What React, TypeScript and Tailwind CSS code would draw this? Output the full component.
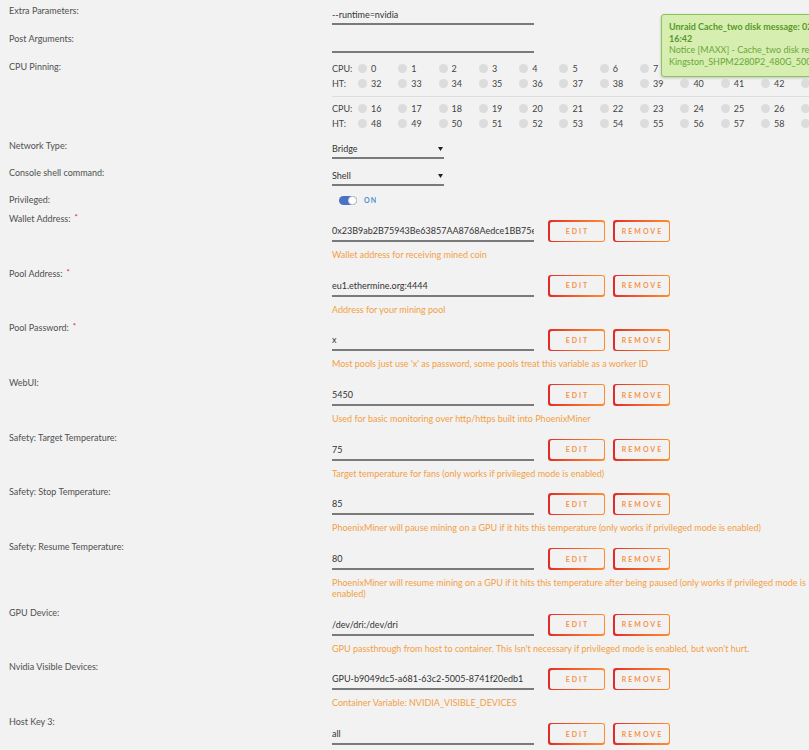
import React from "react";

type Variable = {
  label: string;
  value: string;
  help: string[];
  required?: boolean;
};

const variables: Variable[] = [
  {
    label: "Wallet Address:",
    value: "0x23B9ab2B75943Be63857AA8768Aedce1BB75eD4f",
    help: ["Wallet address for receiving mined coin"],
    required: true,
  },
  {
    label: "Pool Address:",
    value: "eu1.ethermine.org:4444",
    help: ["Address for your mining pool"],
    required: true,
  },
  {
    label: "Pool Password:",
    value: "x",
    help: ["Most pools just use 'x' as password, some pools treat this variable as a worker ID"],
    required: true,
  },
  {
    label: "WebUI:",
    value: "5450",
    help: ["Used for basic monitoring over http/https built into PhoenixMiner"],
  },
  {
    label: "Safety: Target Temperature:",
    value: "75",
    help: ["Target temperature for fans (only works if privileged mode is enabled)"],
  },
  {
    label: "Safety: Stop Temperature:",
    value: "85",
    help: ["PhoenixMiner will pause mining on a GPU if it hits this temperature (only works if privileged mode is enabled)"],
  },
  {
    label: "Safety: Resume Temperature:",
    value: "80",
    help: [
      "PhoenixMiner will resume mining on a GPU if it hits this temperature after being paused (only works if privileged mode is",
      "enabled)",
    ],
  },
  {
    label: "GPU Device:",
    value: "/dev/dri:/dev/dri",
    help: ["GPU passthrough from host to container. This Isn't necessary if privileged mode is enabled, but won't hurt."],
  },
  {
    label: "Nvidia Visible Devices:",
    value: "GPU-b9049dc5-a681-63c2-5005-8741f20edb1",
    help: ["Container Variable: NVIDIA_VISIBLE_DEVICES"],
  },
  {
    label: "Host Key 3:",
    value: "all",
    help: ["Container Variable: NVIDIA_DRIVER_CAPABILITIES"],
  },
];

const cpuRows: { cpu: number[]; ht: number[] }[] = [
  {
    cpu: Array.from({ length: 16 }, (_, i) => i),
    ht: Array.from({ length: 16 }, (_, i) => i + 32),
  },
  {
    cpu: Array.from({ length: 16 }, (_, i) => i + 16),
    ht: Array.from({ length: 16 }, (_, i) => i + 48),
  },
];

function GradientButton({ text }: { text: string }) {
  return (
    <div className="h-[22px] w-[57px] shrink-0 rounded-[3px] bg-linear-to-r from-[#e22828] to-[#ff8c2f] p-[1.5px]">
      <div className="flex h-full w-full items-center justify-center rounded-[2px] bg-[#f2f2f2] pl-[2px] text-[7px] font-bold tracking-[2px] text-[#f7934a]">
        {text}
      </div>
    </div>
  );
}

function Label({ text, required }: { text: string; required?: boolean }) {
  return (
    <div className="w-[332px] shrink-0 pl-[9px] leading-[12px]">
      {text}
      {required && <span className="relative -top-[2px] ml-[4px] text-[8px] text-[#e22828]">*</span>}
    </div>
  );
}

function PinLine({ name, cores }: { name: string; cores: number[] }) {
  return (
    <div className="flex h-[15px] items-center whitespace-nowrap text-[#444]">
      <span className="w-[26px] shrink-0">{name}</span>
      {cores.map((n) => (
        <span key={n} className="flex w-[40.3px] shrink-0 items-center">
          <span className="h-[9px] w-[9px] rounded-full bg-[#dcdcdc]" />
          <span className="ml-[4px]">{n}</span>
        </span>
      ))}
    </div>
  );
}

function DropArrow() {
  return (
    <svg width="5" height="4" viewBox="0 0 5 4" className="mr-[1px]">
      <path d="M0 0 H5 L2.5 4 Z" fill="#222" />
    </svg>
  );
}

export default function App() {
  return (
    <div className="relative min-h-[750px] w-full overflow-hidden bg-[#f2f2f2] pt-[4px] text-[9px] text-[#505050] [font-family:Lato,'Liberation_Sans',sans-serif]">
      {/* Extra Parameters */}
      <div className="mb-[7px] flex">
        <div className="pt-[1px]">
          <Label text="Extra Parameters:" />
        </div>
        <div className="h-[21px] w-[202px] border-b-2 border-[#7a7a7a] pt-[5px] leading-[12px] text-[#333]">
          --runtime=nvidia
        </div>
      </div>

      {/* Post Arguments */}
      <div className="mb-[7px] flex">
        <div className="pt-[1px]">
          <Label text="Post Arguments:" />
        </div>
        <div className="h-[21px] w-[202px] border-b-2 border-[#7a7a7a]" />
      </div>

      {/* CPU Pinning */}
      <div className="mb-[8px] flex">
        <div className="pt-[1px]">
          <Label text="CPU Pinning:" />
        </div>
        <div className="flex-1 pt-[1px]">
          <PinLine name="CPU:" cores={cpuRows[0].cpu} />
          <PinLine name="HT:" cores={cpuRows[0].ht} />
          <div className="mb-[4px] mt-[5px] h-px bg-[#dedede]" />
          <PinLine name="CPU:" cores={cpuRows[1].cpu} />
          <PinLine name="HT:" cores={cpuRows[1].ht} />
        </div>
      </div>

      {/* Network Type */}
      <div className="mb-[7px] flex">
        <div className="pt-[1px]">
          <Label text="Network Type:" />
        </div>
        <div className="flex h-[20px] w-[112px] items-start justify-between border-b-2 border-[#7a7a7a] pt-[4px] leading-[12px] text-[#333]">
          <span>Bridge</span>
          <span className="pt-[4px]">
            <DropArrow />
          </span>
        </div>
      </div>

      {/* Console shell command */}
      <div className="mb-[7px] flex">
        <div className="pt-[1px]">
          <Label text="Console shell command:" />
        </div>
        <div className="flex h-[20px] w-[112px] items-start justify-between border-b-2 border-[#7a7a7a] pt-[4px] leading-[12px] text-[#333]">
          <span>Shell</span>
          <span className="pt-[4px]">
            <DropArrow />
          </span>
        </div>
      </div>

      {/* Privileged */}
      <div className="mb-[7px] flex">
        <div className="pt-[1px]">
          <Label text="Privileged:" />
        </div>
        <div className="flex items-center pt-[2px]">
          <div className="ml-[7px] flex h-[9px] w-[18px] items-center justify-end rounded-full bg-[#4a72c4]">
            <span className="h-[9px] w-[9px] rounded-full border border-[#cfcfcf] bg-white" />
          </div>
          <span className="ml-[7px] text-[7px] font-bold tracking-[1px] text-[#4a90d4]">ON</span>
        </div>
      </div>

      {/* Container variables */}
      {variables.map((v) => (
        <div key={v.label} className="mb-[7.67px] flex">
          <Label text={v.label} required={v.required} />
          <div className="pt-[7px]">
            <div className="flex items-start">
              <div className="h-[22px] w-[202px] overflow-hidden whitespace-nowrap border-b-2 border-[#7a7a7a] pt-[5px] leading-[12px] text-[#333]">
                {v.value}
              </div>
              <div className="ml-[14px]">
                <GradientButton text="EDIT" />
              </div>
              <div className="ml-[8px]">
                <GradientButton text="REMOVE" />
              </div>
            </div>
            <div className="mt-[7px] whitespace-nowrap leading-[11px] text-[#f2a044]">
              {v.help.map((line) => (
                <div key={line}>{line}</div>
              ))}
            </div>
          </div>
        </div>
      ))}

      {/* Notification bubble */}
      <div className="absolute left-[661px] top-[14px] h-[63px] w-[340px] rounded-[3px] border border-[#8ec25a] bg-[#d6efb0] px-[7px] pt-[6px] leading-[11.5px] text-[#6aa63a] shadow-[0_1px_3px_rgba(0,0,0,0.2)]">
        <div className="whitespace-nowrap font-bold text-[#5a962b]">Unraid Cache_two disk message: 02-04-2021</div>
        <div className="whitespace-nowrap font-bold text-[#5a962b]">16:42</div>
        <div className="whitespace-nowrap">Notice [MAXX] - Cache_two disk returned to normal temperature</div>
        <div className="whitespace-nowrap">Kingston_SHPM2280P2_480G_50026B7266051DE6 (nvme0n1)</div>
      </div>
    </div>
  );
}
